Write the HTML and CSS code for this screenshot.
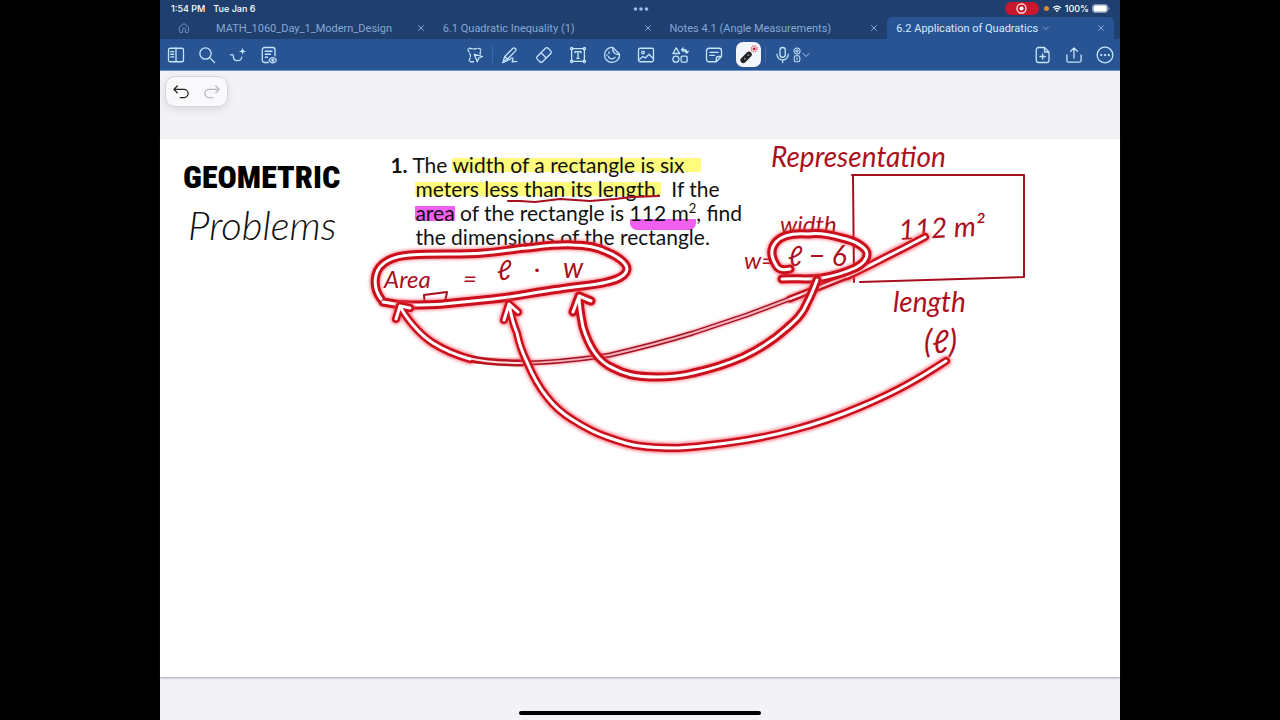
FILE: index.html
```html
<!DOCTYPE html>
<html lang="en">
<head>
<meta charset="utf-8">
<title>6.2 Application of Quadratics</title>
<link rel="stylesheet" href="styles.css">
</head>
<body>
<div class="device">
  <header class="status">
    <div class="status-left"><span>1:54 PM</span><span>Tue Jan 6</span></div>
    <svg class="dots" viewBox="0 0 16 4" aria-hidden="true"><circle cx="2.5" cy="2" r="1.8"/><circle cx="8" cy="2" r="1.8"/><circle cx="13.500" cy="2" r="1.800"/></svg>
    <div class="status-right">
      <span class="record"><svg viewBox="0 0 12 12"><circle cx="6" cy="6" r="4.200" fill="none" stroke="#fff" stroke-width="1.100"/><circle cx="6" cy="6" r="1.900" fill="#fff"/></svg></span>
      <span class="mic-dot"></span>
      <svg class="wifi" viewBox="0 0 12 10"><path d="M1 3.600Q6-.7 11 3.600M2.800 5.600Q6 2.900 9.200 5.600" fill="none" stroke="#fff" stroke-width="1.400"/><path d="M4.200 7Q6 5.600 7.800 7L6 9z" fill="#fff"/></svg>
      <span>100%</span>
      <svg class="battery" viewBox="0 0 20 10"><rect x=".5" y=".5" width="17" height="9" rx="2.800" fill="none" stroke="#8fa3c4"/><rect x="1.500" y="1.500" width="15" height="7" rx="1.800" fill="#fff"/><path d="M18.700 3.500v3" stroke="#8fa3c4" stroke-width="1.200"/></svg>
    </div>
  </header>

  <nav class="tabs">
    <button class="home" aria-label="Home"><svg class="icon-small" viewBox="0 0 24 24"><path d="M3 10.500 12 3l9 7.500V19a2 2 0 0 1-2 2h-4v-6a3 3 0 0 0-6 0v6H5a2 2 0 0 1-2-2z"/></svg></button>
    <div class="tab"><button class="tab-title">MATH_1060_Day_1_Modern_Design</button><button class="close" aria-label="Close tab"><svg viewBox="0 0 8 8"><path d="m1.500 1.500 5 5m0-5-5 5"/></svg></button></div>
    <div class="tab"><button class="tab-title">6.1 Quadratic Inequality (1)</button><button class="close" aria-label="Close tab"><svg viewBox="0 0 8 8"><path d="m1.500 1.500 5 5m0-5-5 5"/></svg></button></div>
    <div class="tab"><button class="tab-title">Notes 4.1 (Angle Measurements)</button><button class="close" aria-label="Close tab"><svg viewBox="0 0 8 8"><path d="m1.500 1.500 5 5m0-5-5 5"/></svg></button></div>
    <div class="tab tab-active"><button class="tab-title">6.2 Application of Quadratics<svg class="chevron" viewBox="0 0 8 8"><path d="m1.500 3 2.500 2.500L6.500 3"/></svg></button><button class="close" aria-label="Close tab"><svg viewBox="0 0 8 8"><path d="m1.500 1.500 5 5m0-5-5 5"/></svg></button></div>
  </nav>

  <div class="toolbar">
    <div class="group group-side">
      <button aria-label="Sidebar"><svg class="icon" viewBox="0 0 24 24"><rect x="2" y="3" width="20" height="18" rx="2.500"/><path d="M12 3v18M5 7.500h4M5 11h4M5 14.500h4"/></svg></button>
      <button aria-label="Search"><svg class="icon" viewBox="0 0 24 24"><circle cx="10" cy="10" r="7.500"/><path d="m15.500 15.500 6.500 6.500"/></svg></button>
      <button aria-label="AI writing"><svg class="icon" viewBox="0 0 24 24"><path d="M2 12c3-1.500 4 0 4 3 0 6 10 6 11 0"/><path d="M18 2c.5 3.500 1.500 4.500 5 5-3.500.5-4.500 1.500-5 5-.5-3.500-1.500-4.500-5-5 3.500-.5 4.500-1.500 5-5z" class="fill"/></svg></button>
      <button aria-label="Document view"><svg class="icon" viewBox="0 0 24 24"><path d="M11 22H6a3 3 0 0 1-3-3V5a3 3 0 0 1 3-3h11a3 3 0 0 1 3 3v8M7 7h9M7 11h7M7 15h3"/><path d="M12 19c2.500-4.500 7.500-4.500 10 0-2.500 4.500-7.500 4.500-10 0z"/><circle cx="17" cy="19" r="1.200"/></svg></button>
    </div>
    <div class="group">
      <button class="tool" aria-label="Lasso"><svg class="icon" viewBox="0 0 24 24"><path stroke-dasharray="4 2.200" d="M10 21H6c-4 0 0-5 0-8S0 3 4 3c3 0 4 1 7 1s6-2 8 0-1 4 0 7"/><path d="m11 11 11 3-5 2-2 5z"/></svg></button>
      <span class="divider"></span>
      <button class="tool" aria-label="Pen"><svg class="icon" viewBox="0 0 24 24"><path d="m3 20 2-6L16 3c2-1.500 5 1 3.500 3.500L8 18zM5 14l4 4M2 22c6-1 9-4 12-6 3-1 2 2 1 4-1 3 5-1 6 1"/></svg></button>
      <button class="tool" aria-label="Eraser"><svg class="icon" viewBox="0 0 24 24"><path d="M3 14 14 3a2.500 2.500 0 0 1 3.500 0L21 6.500a2.500 2.500 0 0 1 0 3.500L10 21a2.500 2.500 0 0 1-3.500 0L3 17.500A2.500 2.500 0 0 1 3 14zM8 9l7 7"/></svg></button>
      <button class="tool" aria-label="Text"><svg class="icon" viewBox="0 0 24 24"><path d="M3.500 5v14M20.500 5v14M5 3.500h14M5 20.500h14M8 9V7.500h8V9M12 7.500v9M10.500 16.500h3"/><circle cx="3.500" cy="3.500" r="1.500"/><circle cx="20.500" cy="3.500" r="1.500"/><circle cx="3.500" cy="20.500" r="1.500"/><circle cx="20.500" cy="20.500" r="1.500"/></svg></button>
      <button class="tool" aria-label="Sticker"><svg class="icon" viewBox="0 0 24 24"><path d="M13 2a10 10 0 1 0 9 9c-6 1-10-3-9-9l9 9M7 14c2 4 7 4 9 1"/><path d="M8 8v2M5 12h.5"/></svg></button>
      <button class="tool" aria-label="Image"><svg class="icon" viewBox="0 0 24 24"><rect x="2" y="3" width="20" height="18" rx="2"/><circle cx="8" cy="8.500" r="1.800"/><path d="m3 18 5-4 3 2 5-5 6 6"/></svg></button>
      <button class="tool" aria-label="Shapes"><svg class="icon" viewBox="0 0 24 24"><path d="M7 2.500 2.500 10h9zM14 5h4c2 0 3 1.500 3 4m-2.500-2L21 9.500 23 7M16.500 2.500 14 5l2.500 2.500"/><circle cx="6.500" cy="17.500" r="4"/><rect x="13.500" y="13.500" width="8" height="8" rx="1.500"/></svg></button>
      <button class="tool" aria-label="Sticky note"><svg class="icon" viewBox="0 0 24 24"><path d="M15 21H5a3 3 0 0 1-3-3V6a3 3 0 0 1 3-3h14a3 3 0 0 1 3 3v8l-7 7v-4a3 3 0 0 1 3-3h4M6.500 8.500h11M6.500 12.500h6"/></svg></button>
      <button class="tool" aria-label="Laser pointer" aria-pressed="true"><span class="selected"><svg class="laser" viewBox="0 0 24 24"><path d="M6 18.500 12.500 12" stroke="#222" stroke-width="6.500" stroke-linecap="round"/><path d="m7.500 17 .5-.5M11.500 13l.5-.5" stroke="#aaa" stroke-width="1.600" stroke-linecap="round"/><circle cx="18.500" cy="5.500" r="3.200" fill="none" stroke="#dd6672" stroke-width="1.800" stroke-dasharray="1.500 1"/><circle cx="18.500" cy="5.500" r="1.600" fill="#c8142a"/></svg></span></button>
      <span class="divider"></span>
      <button class="tool tool-mic" aria-label="Audio recording"><svg class="icon" viewBox="0 0 24 24"><rect x="8" y="2" width="7" height="13" rx="3.500"/><path d="M4 11c0 10 15 10 15 0M11.500 19v3"/></svg><svg class="icon-tall" viewBox="0 0 10 20"><circle cx="5" cy="5" r="3.800"/><path d="M3 5h4M5 3v4M5 13v3"/><rect x="1.500" y="11" width="7" height="7.500" rx="2"/></svg><svg class="chevron" viewBox="0 0 8 8"><path d="m1 2.500 3 3 3-3"/></svg></button>
    </div>
    <div class="group group-end">
      <button aria-label="Add page"><svg class="icon" viewBox="0 0 24 24"><path d="M14 2H6a3 3 0 0 0-3 3v14a3 3 0 0 0 3 3h11a3 3 0 0 0 3-3V8zM14 2v6h6M11.500 10.500v7M8 14h7"/></svg></button>
      <button aria-label="Share"><svg class="icon" viewBox="0 0 24 24"><path d="M2.500 12v7a2.500 2.500 0 0 0 2.500 2.500h14a2.500 2.500 0 0 0 2.500-2.500v-7M12 16V2.500M7.500 7 12 2.500 16.500 7"/></svg></button>
      <button aria-label="More"><svg class="icon" viewBox="0 0 24 24"><circle cx="12" cy="12" r="10.500"/><path stroke-width="3" d="M7 12h.1M12 12h.1M17 12h.1"/></svg></button>
    </div>
  </div>

  <main class="canvas">
    <div class="history">
      <button aria-label="Undo"><svg class="icon undo" viewBox="0 0 24 24"><path d="M7 4 2.500 8.500 7 13M2.500 8.500H16a5 5 0 0 1 0 11h-5"/></svg></button>
      <button aria-label="Redo" disabled><svg class="icon redo" viewBox="0 0 24 24"><path d="m17 4 4.500 4.500L17 13M21.500 8.500H8a5 5 0 0 0 0 11h5"/></svg></button>
    </div>

    <article class="page">
      <h1 class="heading"><span class="heading-bold">GEOMETRIC</span><span class="heading-script">Problems</span></h1>
      <div class="problem">
        <b class="number">1.</b>
        <p class="first">The <mark class="yellow yellow-long">width of a rectangle is six</mark></p>
        <p><mark class="yellow">meters less than its length.</mark>&nbsp; If the</p>
        <p><mark class="magenta">area</mark> of the rectangle is <mark class="magenta-low">112 m<sup>2</sup></mark>, find</p>
        <p>the dimensions of the rectangle.</p>
      </div>

      <svg class="ink" viewBox="160 139 960 538" preserveAspectRatio="xMinYMin meet">
        <defs>
          <filter id="glow" x="-20%" y="-20%" width="140%" height="140%"><feGaussianBlur stdDeviation="1.600"/></filter>
          <path id="loop-area" d="M381 299C375 291 374 284 376 275C379 262 394 256 410 255C440 253 460 255 483 253C500 252 512 249 527 248C545 246 559 244 573 245C588 245 599 248 607 252C617 256 627 263 627 269C626 276 616 280 607 282C592 286 575 286 560 289C535 292 515 297 493 299L443 304C430 305 421 305 410 305C400 305 392 304 383 302"/>
          <path id="area-head" d="M396 319 400 306 410 308M400 306C403 313 408 319 413 325C419 332 425 338 433 343C444 350 456 355 470 359"/>
          <path id="area-taper-left" d="M468 358C484 362 499 363 522 363"/>
          <path id="area-mid" d="M518 363C560 363 590 358 610 355C640 348 667 341 693 333L747 315 800 295"/>
          <path id="area-taper-right" d="M790 299 850 275"/>
          <path id="area-tail" d="M847 276C866 268 885 257 902 249L925 237"/>
          <path id="arrow-l" d="M504 320 509 304 518 312M509 304C511 315 513 324 517 333C519 343 522 352 527 362C532 374 538 386 547 397C554 406 563 414 573 420C584 427 595 433 607 437C618 441 629 445 640 446C654 448 666 448 678 448C696 447 711 445 727 443C750 440 771 436 793 430C816 424 839 416 860 407C877 400 894 392 910 383C923 376 935 368 946 361"/>
          <path id="arrow-w" d="M573 312 579 296 591 301M579 296C579 306 581 317 583 327C586 337 590 346 595 353C600 360 606 365 613 368C624 374 635 377 657 377C670 377 681 376 693 373C711 369 727 364 743 357C760 349 775 339 787 328C795 321 803 314 807 303C811 296 814 288 817 280"/>
          <path id="loop-width" d="M790 269C782 271 778 269 776 265C771 257 770 249 776 242C782 235 795 233 808 234C820 232 832 235 842 238C856 241 867 248 867 254C867 260 861 265 855 268C844 273 833 276 822 278C808 280 796 278 782 279"/>
        </defs>

        <g class="pen">
          <path d="M508 201 520 201 535 202 560 199 590 201 615 199 632 197 659 196"/>
          <path d="M852 175H1024V277L860 282M853 175 854 282"/>
          <path d="M425 307 424 295 447 292 445 302 425 308 441 307"/>
        </g>
        <g class="handwriting">
          <text class="hand-28" x="771" y="167">Representation</text>
          <text class="hand-24" x="780" y="233">width</text>
          <text class="hand-24" x="744" y="269">w=</text>
          <text class="hand-28" x="788" y="266">ℓ − 6</text>
          <text class="hand-28" transform="rotate(-3 900 241)" x="899" y="240">112 m²</text>
          <text class="hand-28" x="893" y="312">length</text>
          <text class="hand-32" x="924" y="353">(ℓ)</text>
          <text class="hand-24" x="384" y="288">Area</text>
          <text class="hand-24" x="463" y="287">=</text>
          <text class="hand-28" x="497" y="280">ℓ</text>
          <text class="hand-24" x="534" y="277">·</text>
          <text class="hand-28" x="563" y="278">w</text>
        </g>

        <g class="laser-ink">
          <g><use href="#loop-area" class="halo"/><use href="#loop-area" class="body"/><use href="#loop-area" class="core"/></g>
          <g>
            <use href="#area-mid" class="halo halo-thin"/><use href="#area-taper-left" class="halo halo-taper"/><use href="#area-taper-right" class="halo halo-taper"/><use href="#area-tail" class="halo"/><use href="#area-head" class="halo"/>
            <use href="#area-mid" class="body body-thin"/><use href="#area-taper-left" class="body body-taper"/><use href="#area-taper-right" class="body body-taper"/><use href="#area-tail" class="body body-medium"/><use href="#area-head" class="body body-medium"/>
            <use href="#area-mid" class="core core-thin"/><use href="#area-taper-left" class="core core-taper"/><use href="#area-taper-right" class="core core-taper"/><use href="#area-tail" class="core"/><use href="#area-head" class="core"/>
          </g>
          <g><use href="#loop-width" class="halo"/><use href="#loop-width" class="body"/><use href="#loop-width" class="core"/></g>
          <g><use href="#arrow-w" class="halo"/><use href="#arrow-w" class="body"/><use href="#arrow-w" class="core"/></g>
          <g><use href="#arrow-l" class="halo"/><use href="#arrow-l" class="body body-medium"/><use href="#arrow-l" class="core"/></g>
        </g>
      </svg>
    </article>

    <footer class="footer"><span class="home-indicator"></span></footer>
  </main>
</div>
</body>
</html>
```
FILE: styles.css
```css
* { box-sizing: border-box; }

body {
  margin: 0;
  padding: 0 12.5%;
  background: #000;
  font-family: Inter, "Liberation Sans", sans-serif;
}

button {
  display: flex;
  align-items: center;
  justify-content: center;
  padding: 0;
  border: 0;
  background: none;
  color: inherit;
  font: inherit;
}

svg { display: block; flex-shrink: 0; }

.device {
  display: flex;
  flex-direction: column;
  min-height: 100vh;
  background: #1f3f6e;
}

.status {
  display: grid;
  grid-template-columns: 1fr auto 1fr;
  align-items: center;
  height: 17px;
  padding: 0 10px 0 11px;
  color: #fff;
  font-size: 9px;
  font-weight: 500;
}

.status-left { display: flex; gap: 8px; }
.status-right { display: flex; align-items: center; justify-content: flex-end; gap: 3px; }
.dots { width: 16px; height: 4px; fill: #9bbdec; }

.record {
  display: flex;
  justify-content: center;
  width: 34px;
  margin-right: 2px;
  border-radius: 7px;
  background: #c9182b;
}

.record svg { width: 13px; height: 13px; }
.mic-dot { width: 5px; height: 5px; border-radius: 50%; background: #e08a2c; }
.wifi { width: 10px; height: 8px; }
.battery { width: 18px; height: 9px; }

.tabs {
  display: flex;
  height: 22px;
  padding-right: 6px;
  color: #86a7d6;
  font-family: Roboto, sans-serif;
  font-size: 11px;
}

.home { width: 47px; }

.tab {
  display: flex;
  flex: 1;
  align-items: center;
  justify-content: space-between;
  min-width: 0;
  padding: 0 9px;
  border-radius: 5px 5px 0 0;
}

.tab-title { gap: 4px; white-space: nowrap; }
.tab-active { background: #295493; color: #d5eaff; }

.close svg,
.chevron {
  width: 8px;
  height: 8px;
  fill: none;
  stroke: #86a7d6;
  stroke-linecap: round;
}

.icon,
.icon-small,
.icon-tall {
  fill: none;
  stroke: #c4e6ff;
  stroke-width: 1.7;
  stroke-linecap: round;
  stroke-linejoin: round;
}

.icon { width: 18px; height: 18px; }
.icon-small { width: 12px; height: 12px; stroke: #6f93c6; stroke-width: 2; }
.icon-tall { width: 8px; height: 16px; stroke-width: 1.3; }
.fill { fill: #c4e6ff; stroke-width: 0; }

.toolbar {
  display: grid;
  grid-template-columns: 1fr auto 1fr;
  height: 32px;
  border-bottom: 1px solid #6f98cc;
  background: #295493;
}

.group { display: flex; align-items: center; }
.group-side button,
.group-end button { width: 31px; }
.group-end { justify-content: flex-end; }
.tool { width: 34px; }
.tool-mic { width: 56px; gap: 1px; padding-right: 4px; }
.tool-mic .chevron { stroke: #a9cdf5; }
.divider { width: 1px; height: 17px; background: #3b68a8; }

.selected {
  display: flex;
  align-items: center;
  justify-content: center;
  width: 25px;
  height: 25px;
  border-radius: 7px;
  background: #f3f6fb;
}

.laser { width: 21px; height: 21px; fill: none; }

.canvas {
  display: flex;
  flex: 1;
  flex-direction: column;
  background: #f3f2f6;
}

.history {
  display: flex;
  align-self: flex-start;
  width: 63px;
  height: 31px;
  margin: 5px 5px 32px;
  border: 1px solid #d6d5d9;
  border-radius: 10px;
  background: #f9f9fb;
  box-shadow: 0 3px 8px rgba(0, 0, 0, 0.1);
}

.history button { flex: 1; }
.history .undo { stroke: #222; }
.history .redo { stroke: #b9b9bd; }

.page {
  position: relative;
  display: grid;
  flex: 1;
  grid-template-columns: 24% 1fr;
  align-content: start;
  background: #fff;
  box-shadow: 0 1px 2px rgba(60, 50, 70, 0.4);
  color: #111;
}

.heading {
  display: flex;
  flex-direction: column;
  margin: 0;
  padding: 18px 0 0 23px;
}

.heading-bold {
  font-family: "Roboto Condensed", Roboto, sans-serif;
  font-size: 32px;
  font-weight: 900;
  line-height: 40px;
  color: #000;
}

.heading-script {
  padding-left: 5px;
  font-family: Lato, sans-serif;
  font-size: 40px;
  font-style: italic;
  font-weight: 300;
  line-height: 56px;
}

.problem {
  display: grid;
  grid-template-columns: 22px 1fr;
  align-content: start;
  padding-top: 14px;
  font-family: Lato, "Open Sans", sans-serif;
  font-size: 21px;
  line-height: 24px;
  white-space: nowrap;
}

.problem p { grid-column: 2; margin: 0; padding-left: 3px; }
.problem .first { padding-left: 0; }
.number { grid-column: 1; }

.problem mark {
  border-radius: 7px;
  background-color: transparent;
  background-repeat: no-repeat;
  color: inherit;
}

.yellow { background-image: linear-gradient(transparent 6px, #fffb7c 6px 20px, transparent 20px); }
.problem .yellow-long { padding-right: 16px; }
.magenta { background-image: linear-gradient(transparent 6px, #f060f0 6px 21px, transparent 21px); }
.magenta-low { padding-bottom: 5px; background-image: linear-gradient(transparent 19px, #f060f0 19px); }
.problem sup { font-size: 13px; line-height: 0; }

.ink {
  position: absolute;
  top: 0;
  left: 0;
  width: 100%;
  height: 100%;
  overflow: visible;
}

.pen path {
  fill: none;
  stroke: #a80f1c;
  stroke-width: 2;
  stroke-linecap: round;
  stroke-linejoin: round;
}

.handwriting {
  fill: #ab101d;
  font-family: Lato, "DejaVu Sans", sans-serif;
  font-style: italic;
}

.hand-24 { font-size: 24px; }
.hand-28 { font-size: 28px; }
.hand-32 { font-size: 32px; }

.laser-ink {
  fill: none;
  stroke-linecap: round;
  stroke-linejoin: round;
}

.halo { stroke: #ff4050; stroke-width: 11px; opacity: 0.6; filter: url(#glow); }
.body { stroke: #c9101c; stroke-width: 9px; }
.core { stroke: #fff; stroke-width: 3px; }
.body-medium { stroke-width: 8px; }
.halo-taper { stroke-width: 9px; }
.body-taper { stroke: #b81420; stroke-width: 7px; }
.core-taper { stroke: #fbdfe3; stroke-width: 2px; }
.halo-thin { stroke-width: 6px; }
.body-thin { stroke: #a01525; stroke-width: 5px; }
.core-thin { stroke: #f5b0ba; stroke-width: 2px; }

.footer {
  display: flex;
  align-items: flex-end;
  justify-content: center;
  height: 43px;
  padding-bottom: 5px;
}

.home-indicator { width: 242px; height: 4px; border-radius: 2px; background: #000; }
```
